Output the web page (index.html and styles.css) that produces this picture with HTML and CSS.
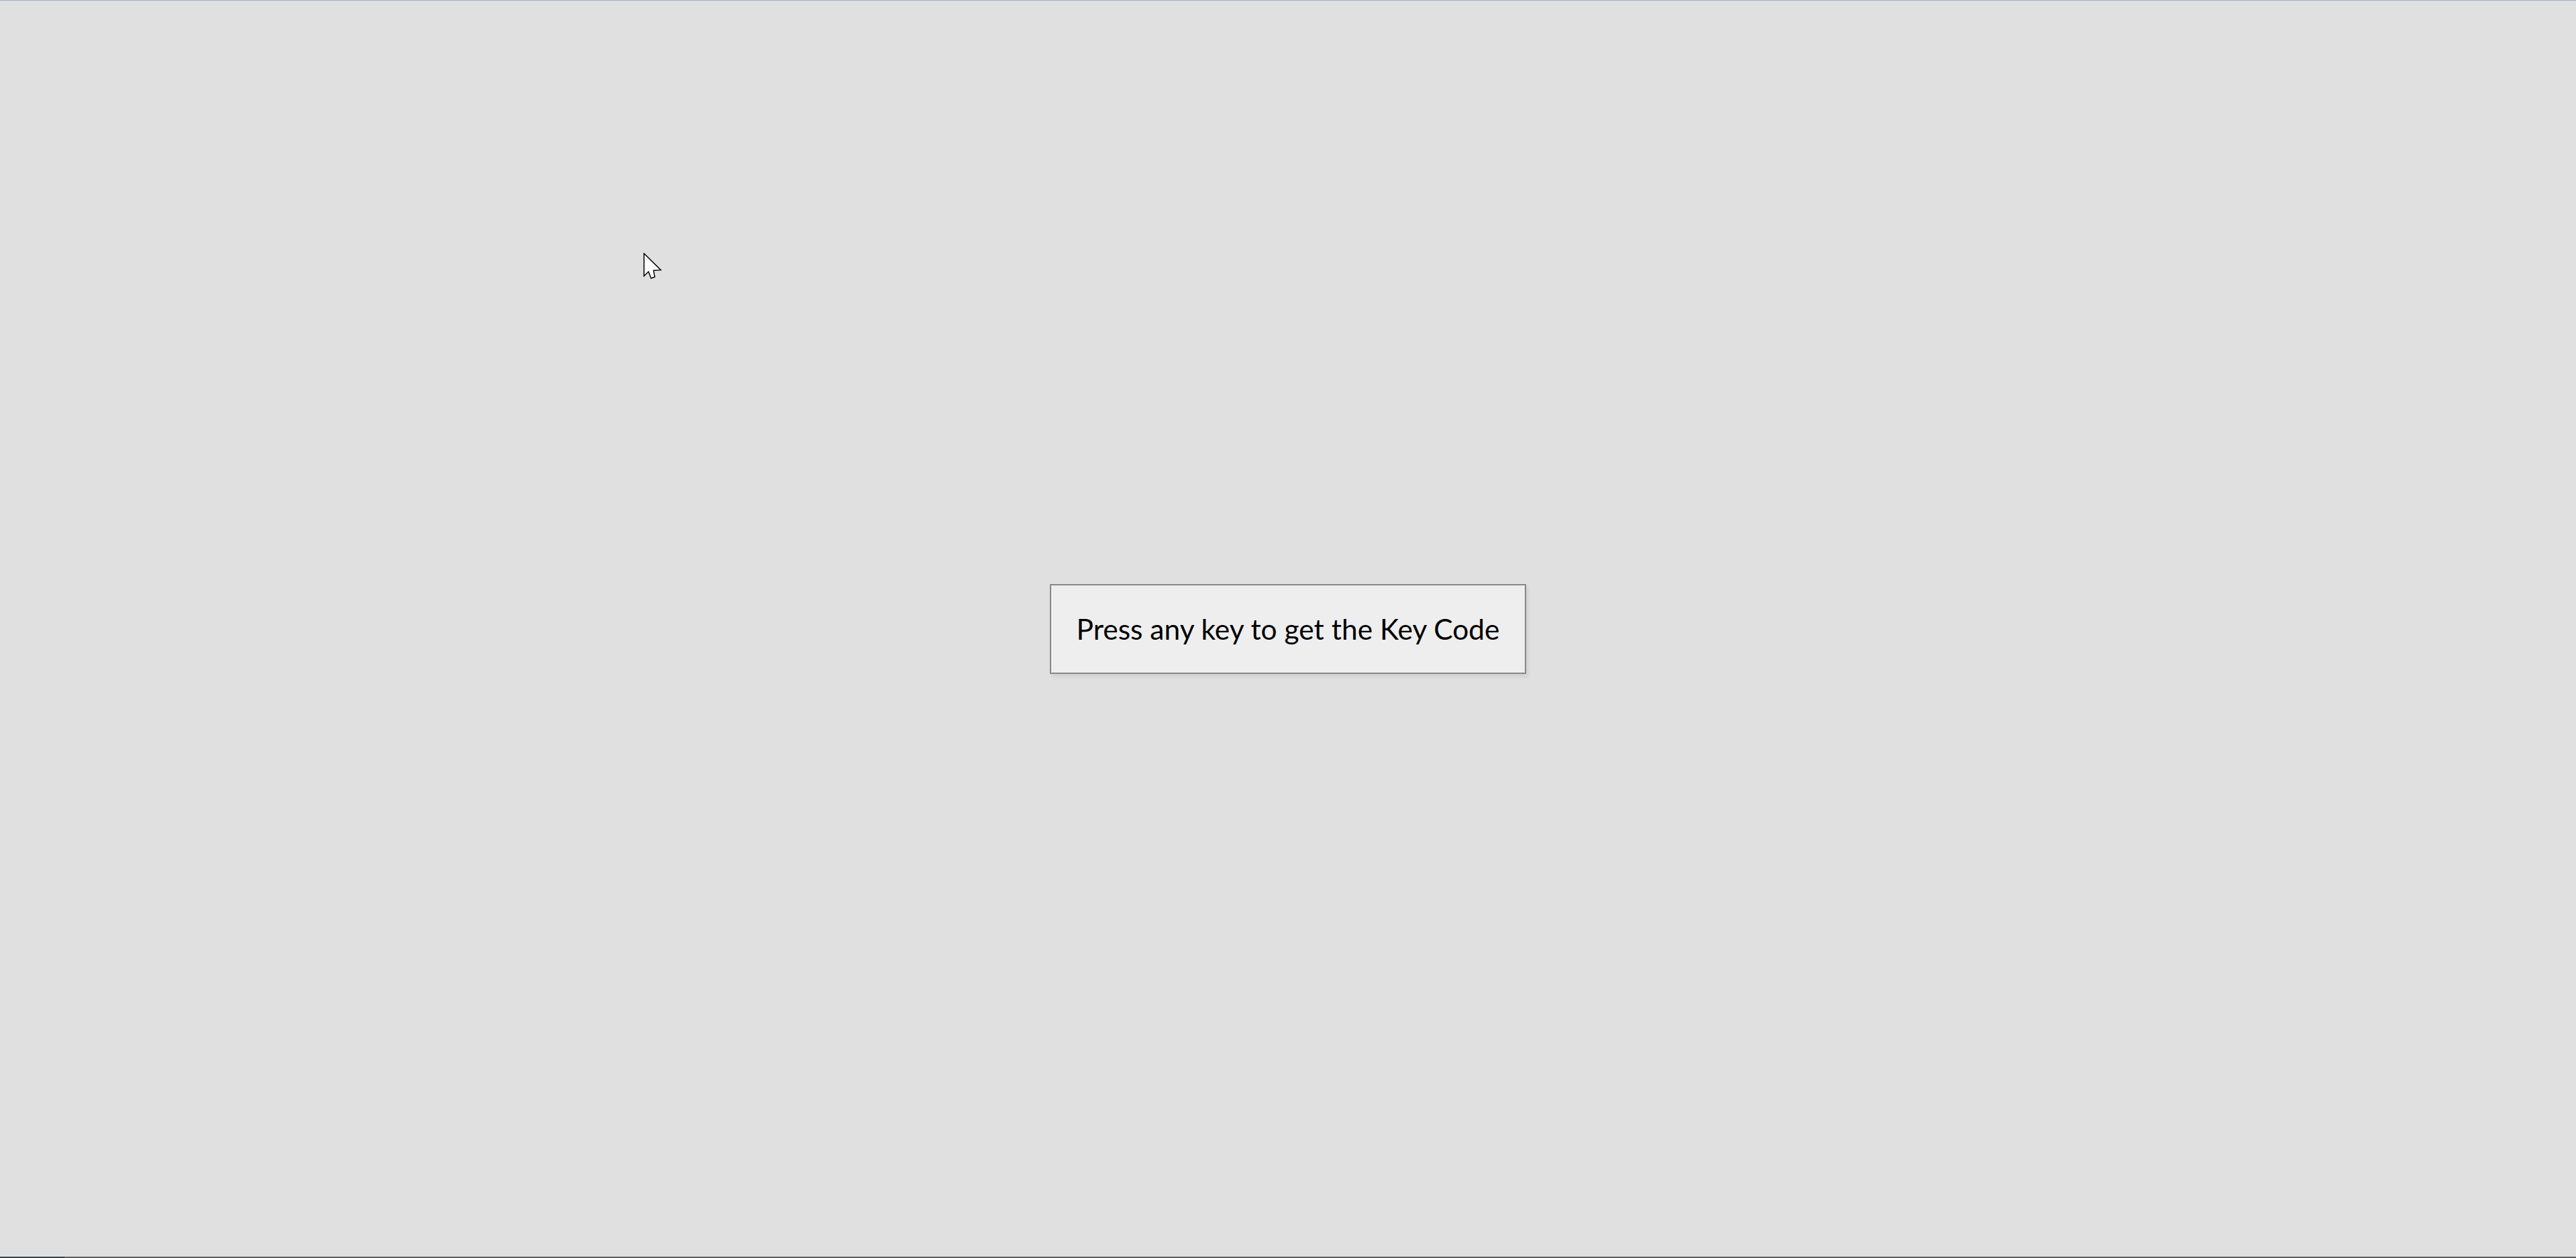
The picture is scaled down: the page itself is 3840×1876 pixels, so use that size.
FILE: index.html
```html
<!DOCTYPE html>
<html lang="en">
<head>
<meta charset="utf-8">
<title>Key Code</title>
<link rel="stylesheet" href="styles.css">
</head>
<body>
<div class="topline"></div>
<main class="stage">
  <div class="keybox">Press any key to get the Key Code</div>
</main>
<div class="bottomline"><span class="bottomline-dark"></span></div>
<svg class="cursor" width="28" height="42" viewBox="0 0 28 42" xmlns="http://www.w3.org/2000/svg">
  <path d="M1 1 L1 34.7 L7.7 28 L11.5 38 L17 36 L15.3 26.3 L26 25.7 Z" fill="#fff" stroke="#000" stroke-width="1.5" stroke-linejoin="miter"/>
</svg>
</body>
</html>
```

FILE: styles.css
```css
html, body {
  margin: 0;
  padding: 0;
  height: 100%;
}
body {
  background: #e0e0e0;
  font-family: Lato, "Noto Sans", sans-serif;
  display: flex;
  flex-direction: column;
  overflow: hidden;
}
.topline {
  height: 1px;
  background: #9aabc6;
  flex: none;
}
.stage {
  flex: 1;
  display: flex;
  align-items: center;
  justify-content: center;
}
.keybox {
  box-sizing: border-box;
  width: 710px;
  height: 134px;
  border: 2px solid #878787;
  background: #eeeeee;
  display: flex;
  align-items: center;
  justify-content: center;
  font-size: 42.5px;
  color: #000;
  box-shadow: 3px 4px 6px rgba(0,0,0,0.08);
}
.bottomline {
  height: 2px;
  background: #5f5f5f;
  flex: none;
  display: flex;
}
.bottomline-dark {
  width: 96px;
  background: #3b3f46;
}
.cursor {
  position: absolute;
  left: 959px;
  top: 377px;
}
```
